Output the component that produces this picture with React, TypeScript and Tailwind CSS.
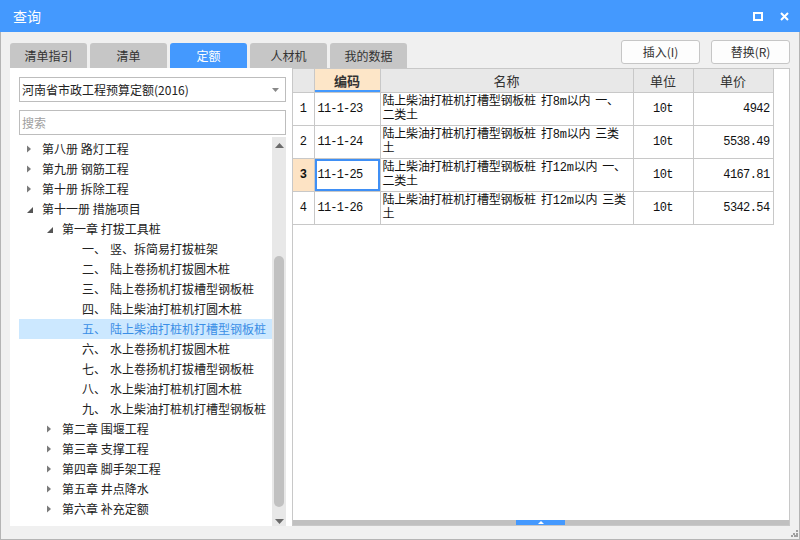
import React from 'react';

type TreeNode = {
  level: 0 | 1 | 2;
  label: string;
  num?: string;
  state?: 'open' | 'closed';
  selected?: boolean;
};

const tree: TreeNode[] = [
  { level: 0, label: '第八册 路灯工程', state: 'closed' },
  { level: 0, label: '第九册 钢筋工程', state: 'closed' },
  { level: 0, label: '第十册 拆除工程', state: 'closed' },
  { level: 0, label: '第十一册 措施项目', state: 'open' },
  { level: 1, label: '第一章 打拔工具桩', state: 'open' },
  { level: 2, num: '一、', label: '竖、拆简易打拔桩架' },
  { level: 2, num: '二、', label: '陆上卷扬机打拔圆木桩' },
  { level: 2, num: '三、', label: '陆上卷扬机打拔槽型钢板桩' },
  { level: 2, num: '四、', label: '陆上柴油打桩机打圆木桩' },
  { level: 2, num: '五、', label: '陆上柴油打桩机打槽型钢板桩', selected: true },
  { level: 2, num: '六、', label: '水上卷扬机打拔圆木桩' },
  { level: 2, num: '七、', label: '水上卷扬机打拔槽型钢板桩' },
  { level: 2, num: '八、', label: '水上柴油打桩机打圆木桩' },
  { level: 2, num: '九、', label: '水上柴油打桩机打槽型钢板桩' },
  { level: 1, label: '第二章 围堰工程', state: 'closed' },
  { level: 1, label: '第三章 支撑工程', state: 'closed' },
  { level: 1, label: '第四章 脚手架工程', state: 'closed' },
  { level: 1, label: '第五章 井点降水', state: 'closed' },
  { level: 1, label: '第六章 补充定额', state: 'closed' },
];

const rows = [
  { no: '1', code: '11-1-23', name: ['陆上柴油打桩机打槽型钢板桩 打8m以内 一、', '二类土'], unit: '10t', price: '4942' },
  { no: '2', code: '11-1-24', name: ['陆上柴油打桩机打槽型钢板桩 打8m以内 三类', '土'], unit: '10t', price: '5538.49' },
  { no: '3', code: '11-1-25', name: ['陆上柴油打桩机打槽型钢板桩 打12m以内 一、', '二类土'], unit: '10t', price: '4167.81', active: true },
  { no: '4', code: '11-1-26', name: ['陆上柴油打桩机打槽型钢板桩 打12m以内 三类', '土'], unit: '10t', price: '5342.54' },
];

const tabs = ['清单指引', '清单', '定额', '人材机', '我的数据'];

const ui = { fontFamily: "'Noto Sans CJK SC', 'Liberation Sans', sans-serif" };
const mono = { fontFamily: "'Liberation Mono', 'Noto Sans CJK SC', monospace" };

const Arrow: React.FC<{ open: boolean }> = ({ open }) =>
  open ? (
    <svg width="16" height="20" viewBox="0 0 16 20" className="shrink-0">
      <polygon points="7,8 7,14 1,14" fill="#555" />
    </svg>
  ) : (
    <svg width="16" height="20" viewBox="0 0 16 20" className="shrink-0">
      <polygon points="1,6.5 5,10 1,13.5" fill="#7a7a7a" />
    </svg>
  );

const App: React.FC = () => {
  return (
    <div className="w-[800px] h-[540px] flex flex-col bg-[#f0f0f0] relative overflow-hidden" style={ui}>
      {/* title bar */}
      <div className="h-[32px] bg-[#4499fe] flex items-center justify-between pl-[13px] pr-[11px] text-white">
        <span className="text-[14px]">查询</span>
        <div className="flex items-center gap-[17px]">
          <svg width="10" height="9" viewBox="0 0 10 9">
            <rect x="1" y="1" width="8" height="7" fill="none" stroke="#fff" strokeWidth="2" />
          </svg>
          <svg width="9" height="9" viewBox="0 0 9 9">
            <path d="M1 1 L8 8 M8 1 L1 8" stroke="#fff" strokeWidth="2" />
          </svg>
        </div>
      </div>

      <div className="flex-1 flex flex-col px-[9px] pb-[13px] border-x border-b border-[#b4b4b4]">
        {/* tabs + buttons */}
        <div className="h-[36px] flex justify-between">
          <div className="flex gap-[3px] pt-[11px]">
            {tabs.map(t => (
              <div
                key={t}
                className={`w-[77px] h-[25px] rounded-t-[3px] flex items-center justify-center text-[12px] ${
                  t === '定额' ? 'bg-[#4499fe] text-white' : 'bg-[#c6c6c6] text-[#333]'
                }`}
              >
                {t}
              </div>
            ))}
          </div>
          <div className="flex gap-[11px] pt-[8px]">
            {['插入(I)', '替换(R)'].map(b => (
              <button
                key={b}
                className="w-[79px] h-[24px] bg-[#fdfdfd] border border-[#c6c6c6] rounded-[3px] text-[12px] text-[#333] flex items-center justify-center"
              >
                {b}
              </button>
            ))}
          </div>
        </div>

        {/* main */}
        <div className="flex-1 flex">
          {/* left panel */}
          <div className="w-[282px] bg-white flex flex-col pl-[9px] pt-[9px]">
            <div className="w-[267px] h-[25px] border border-[#bdbdbd] flex items-center justify-between pl-[2px] pr-[6px]">
              <span className="text-[12px] text-[#222]">河南省市政工程预算定额(2016)</span>
              <svg width="7" height="4" viewBox="0 0 7 4">
                <polygon points="0,0 7,0 3.5,4" fill="#888" />
              </svg>
            </div>
            <div className="w-[267px] h-[25px] mt-[8px] border border-[#bdbdbd] flex items-center pl-[2px]">
              <span className="text-[12px] text-[#a0a0a0]">搜索</span>
            </div>
            <div className="flex-1 flex mt-[2px] min-h-0">
              <div className="w-[253px] pt-[2px]">
                {tree.map(n => (
                  <div
                    key={n.label}
                    className={`h-[20px] flex items-center text-[12px] whitespace-nowrap ${
                      n.selected ? 'bg-[#cce8ff] text-[#3a8ee6]' : 'text-[#222]'
                    } ${n.level === 0 ? 'pl-[7px]' : n.level === 1 ? 'pl-[27px]' : 'pl-[63px]'}`}
                  >
                    {n.state && <Arrow open={n.state === 'open'} />}
                    {n.num && <span className="w-[28px] shrink-0">{n.num}</span>}
                    <span>{n.label}</span>
                  </div>
                ))}
              </div>
              <div className="w-[14px] bg-[#e8e8e8] flex flex-col items-center pb-[1px]">
                <div className="h-[14px] flex items-center justify-center pt-[2px]">
                  <svg width="9" height="5" viewBox="0 0 9 5">
                    <polygon points="0,5 9,5 4.5,0" fill="#6b6b6b" />
                  </svg>
                </div>
                <div className="flex-1 w-full flex flex-col items-center pt-[105px] pb-[10px]">
                  <div className="w-[10px] flex-1 bg-[#c1c1c1] rounded-full" />
                </div>
                <div className="h-[8px] flex items-center justify-center">
                  <svg width="9" height="5" viewBox="0 0 9 5">
                    <polygon points="0,0 9,0 4.5,5" fill="#6b6b6b" />
                  </svg>
                </div>
              </div>
            </div>
          </div>

          {/* right panel */}
          <div className="flex-1 bg-white border border-[#c8c8c8] flex flex-col">
            <div className="flex-1">
              <table className="border-collapse table-fixed w-[480px]">
                <colgroup>
                  <col className="w-[21px]" />
                  <col className="w-[66px]" />
                  <col className="w-[253px]" />
                  <col className="w-[60px]" />
                  <col className="w-[80px]" />
                </colgroup>
                <thead>
                  <tr className="h-[23px] text-[13px] text-[#333]">
                    <th className="bg-[#e8e8e8] border border-[#c8c8c8] border-t-0 border-l-0 font-normal"></th>
                    <th className="bg-[#fde6c8] border border-[#c8c8c8] border-t-0 font-bold shadow-[inset_0_-2px_0_#4499fe]">编码</th>
                    <th className="bg-[#e8e8e8] border border-[#c8c8c8] border-t-0 font-normal">名称</th>
                    <th className="bg-[#e8e8e8] border border-[#c8c8c8] border-t-0 font-normal">单位</th>
                    <th className="bg-[#e8e8e8] border border-[#c8c8c8] border-t-0 font-normal">单价</th>
                  </tr>
                </thead>
                <tbody className="text-[12px] text-[#111]" style={mono}>
                  {rows.map(r => (
                    <tr key={r.no} className="h-[33px]">
                      <td
                        className={`border border-[#c8c8c8] border-l-0 text-center ${
                          r.active ? 'bg-[#fde3c4] font-bold' : ''
                        }`}
                      >
                        {r.no}
                      </td>
                      <td
                        className={`border border-[#c8c8c8] pl-[3px] tracking-[-0.8px] ${
                          r.active ? 'shadow-[inset_0_0_0_2px_#3f8ff5]' : ''
                        }`}
                      >
                        {r.code}
                      </td>
                      <td className="border border-[#c8c8c8] pl-[2px] leading-[14px] whitespace-nowrap overflow-hidden tracking-[-0.2px] [word-spacing:-2px]">
                        {r.name.map(l => (
                          <div key={l}>{l}</div>
                        ))}
                      </td>
                      <td className="border border-[#c8c8c8] text-center tracking-[-0.6px]">{r.unit}</td>
                      <td className="border border-[#c8c8c8] text-right pr-[3px] tracking-[-0.6px]">{r.price}</td>
                    </tr>
                  ))}
                </tbody>
              </table>
            </div>
            <div className="h-[5px] bg-[#c0c0c0] flex">
              <div className="w-[223px]" />
              <div className="w-[49px] bg-[#4499fe] flex items-center justify-center">
                <svg width="6" height="3" viewBox="0 0 6 3">
                  <polygon points="0,3 6,3 3,0" fill="#fff" />
                </svg>
              </div>
            </div>
          </div>
        </div>
      </div>

      {/* resize grip */}
      <svg className="absolute right-[2px] bottom-[3px]" width="7" height="7" viewBox="0 0 7 7">
        <rect x="5" y="0" width="2" height="2" fill="#a0a0a0" />
        <rect x="2" y="3" width="2" height="2" fill="#a0a0a0" />
        <rect x="5" y="3" width="2" height="2" fill="#a0a0a0" />
        <rect x="0" y="5" width="2" height="2" fill="#a0a0a0" />
        <rect x="3" y="5" width="2" height="2" fill="#a0a0a0" />
        <rect x="5" y="5" width="2" height="2" fill="#a0a0a0" />
      </svg>
    </div>
  );
};

export default App;
